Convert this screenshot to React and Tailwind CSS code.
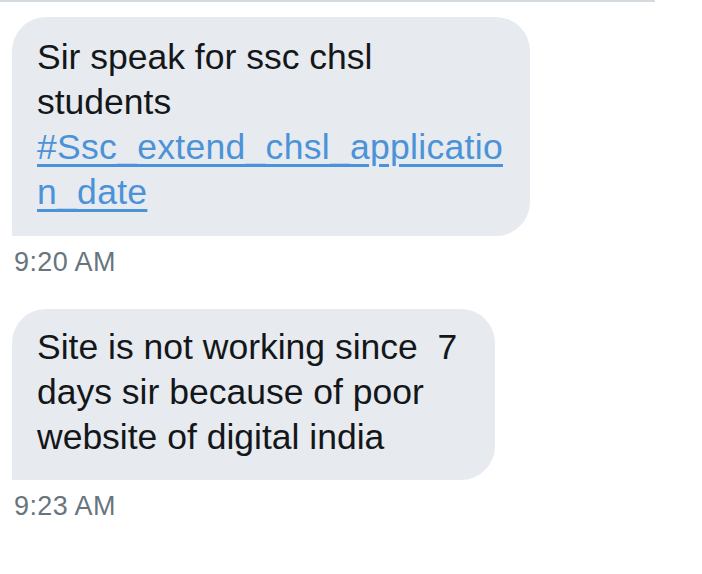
export default function App() {
    return (
        <div
            className="w-[702px] h-[574px] bg-white overflow-hidden"
            style={{ fontFamily: '"Liberation Sans", Arial, sans-serif' }}
        >
            {/* divider left over from the thread above */}
            <div className="h-[2px] w-[655px] bg-[#d3dbe1]" />

            <div className="flex flex-col items-start pl-[12px] pt-[15px]">
                <div className="w-[518px] bg-[#e7eaee] rounded-[34px] rounded-bl-none pl-[25px] pr-[20px] pt-[18px] pb-[21px] text-[35.5px] leading-[45px] text-[#14171a]">
                    Sir speak for ssc chsl
                    <br />
                    students
                    <br />
                    <a className="text-[#4a93d8] tracking-[0.3px] underline decoration-[2.5px] underline-offset-[5px]">
                        #Ssc_extend_chsl_applicatio
                        <br />
                        n_date
                    </a>
                </div>
                <span className="mt-[11px] ml-[2px] text-[27px] leading-[30px] tracking-[0.4px] text-[#68757f]">9:20 AM</span>

                <div className="mt-[32px] w-[483px] bg-[#e7eaee] rounded-[34px] rounded-bl-none pl-[25px] pr-[20px] pt-[16px] pb-[20px] text-[35.5px] leading-[45px] text-[#14171a] whitespace-pre">
                    {'Site is not working since  7\ndays sir because of poor\nwebsite of digital india'}
                </div>
                <span className="mt-[11px] ml-[2px] text-[27px] leading-[30px] tracking-[0.4px] text-[#68757f]">9:23 AM</span>
            </div>
        </div>
    );
}
